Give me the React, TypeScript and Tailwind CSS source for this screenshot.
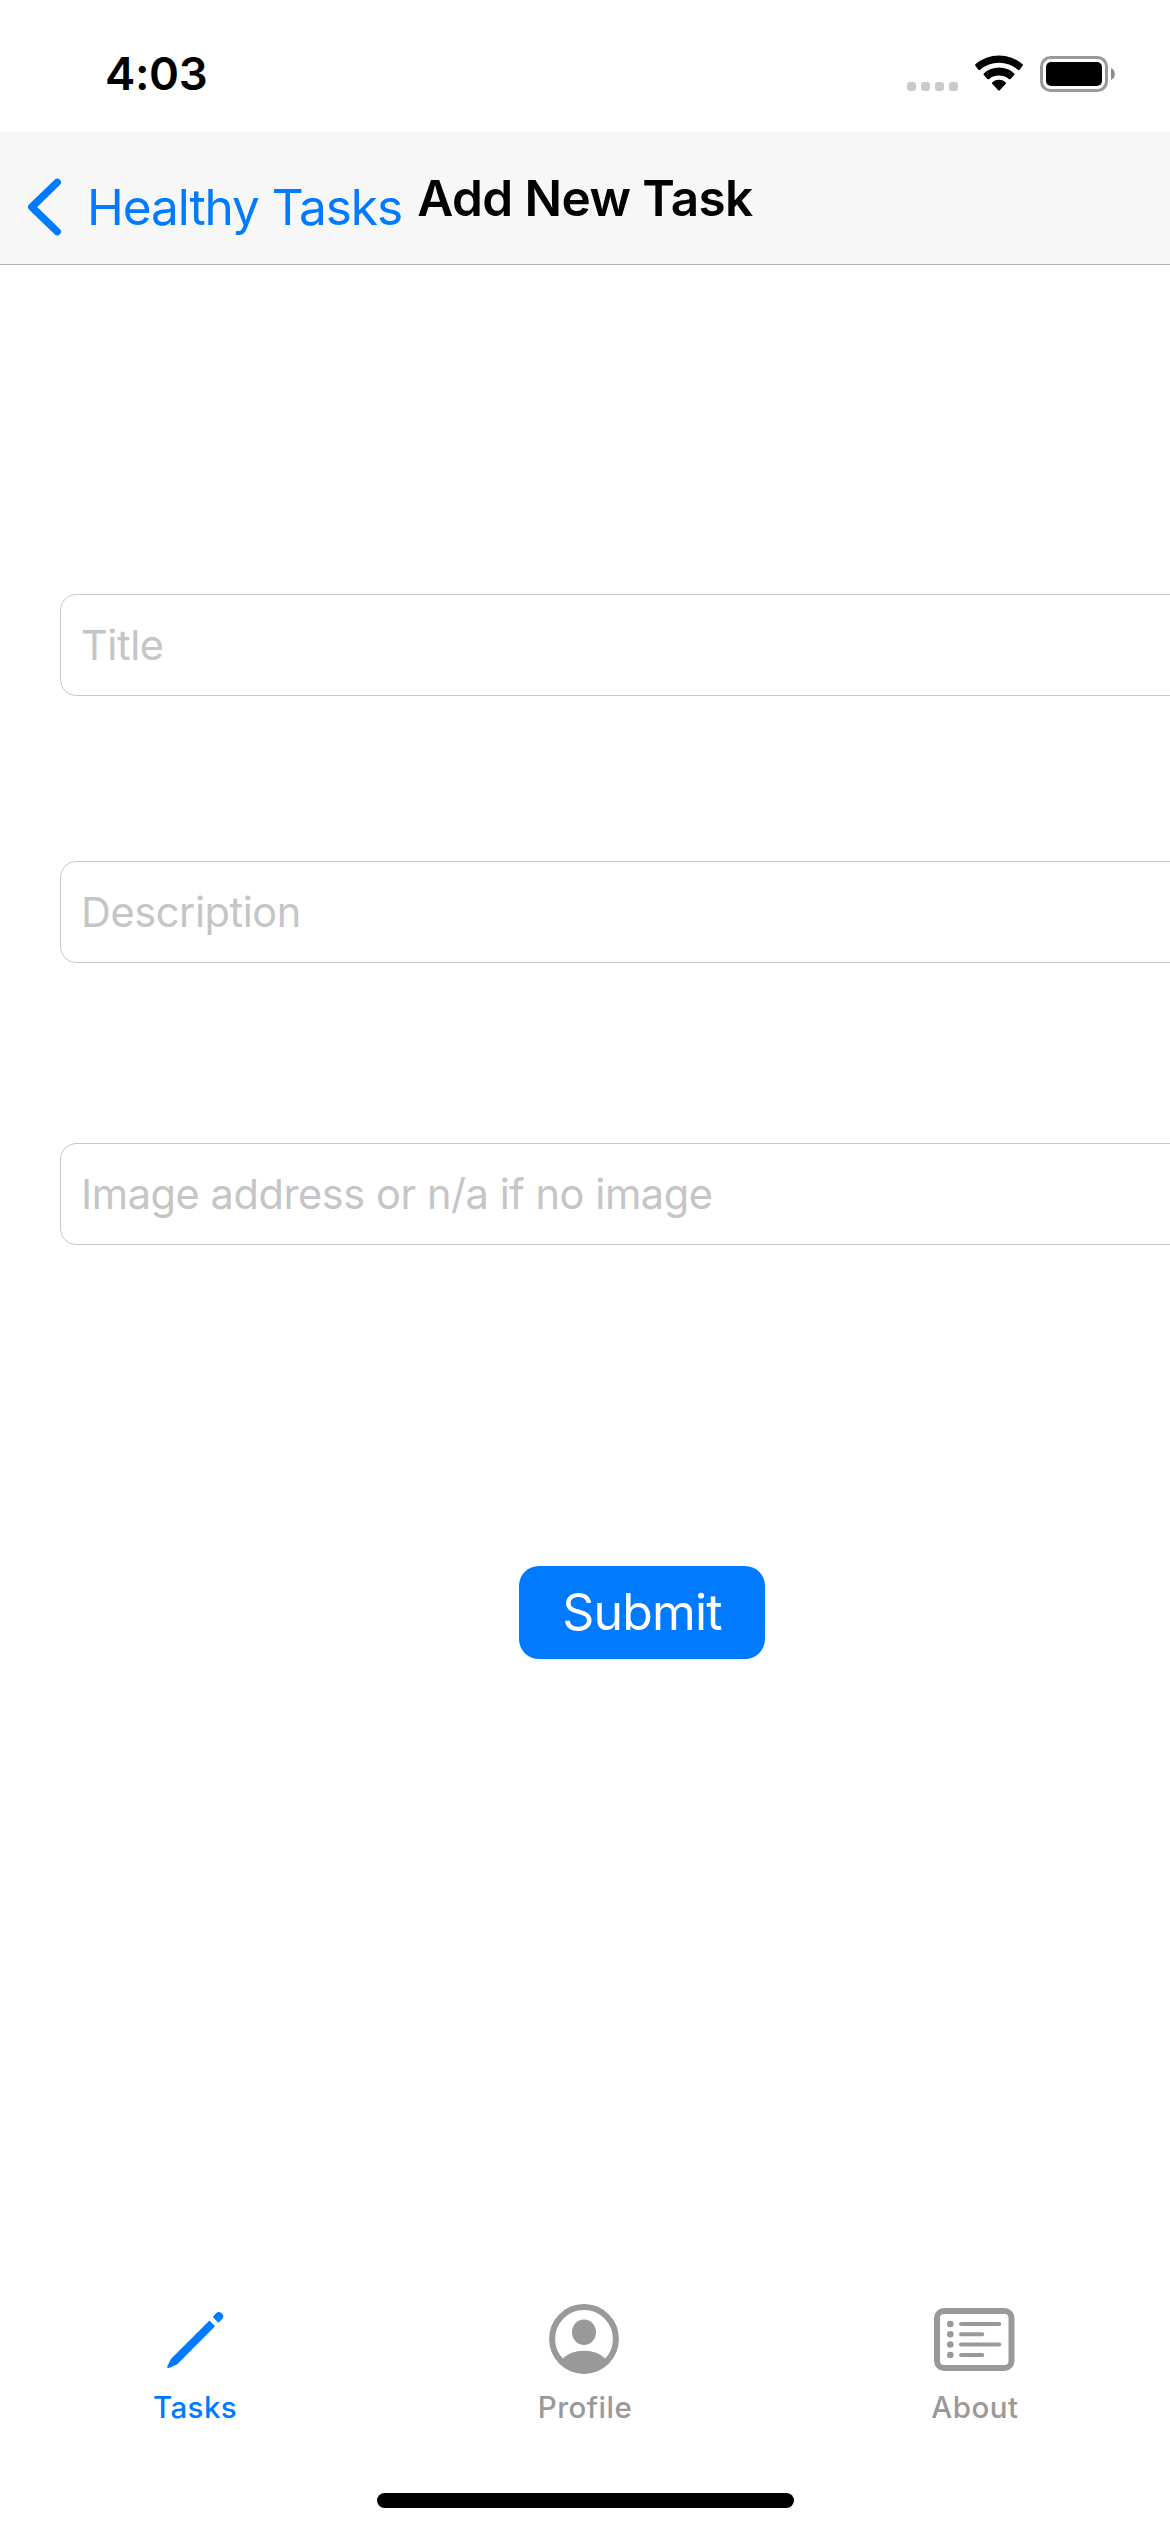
import React from "react";

function StatusBar() {
  return (
    <div className="flex h-[132px] shrink-0 items-start justify-between bg-white pt-[44px] pr-[54px] pl-[105px]">
      <span className="h-[60px] text-[45.5px] leading-[60px] font-semibold tracking-[-0.4px]">4:03</span>
      <svg width="211" height="60" viewBox="0 0 211 60" fill="none">
        <g fill="#cacaca">
          <rect x="2" y="38" width="9" height="9" rx="3" />
          <rect x="16" y="38" width="9" height="9" rx="3" />
          <rect x="30" y="38" width="9" height="9" rx="3" />
          <rect x="44" y="38" width="9" height="9" rx="3" />
        </g>
        <g fill="#000">
          <path d="M70.4 20.2Q69.6 21 70.4 21.8L73.4 25.8Q74.3 26.6 75.2 25.8A28.6 28.6 0 0 1 112.8 25.8Q113.7 26.6 114.6 25.8L117.6 21.8Q118.4 21 117.6 20.2A36 36 0 0 0 70.4 20.2Z" />
          <path d="M78.8 29.4Q78 30.2 78.8 31L82.4 34.9Q83.3 35.7 84.2 34.9A16.2 16.2 0 0 1 103.8 34.9Q104.7 35.7 105.6 34.9L109.2 31Q110 30.2 109.2 29.4A22.5 22.5 0 0 0 78.8 29.4Z" />
          <path d="M87.4 38.2Q86.5 39.1 87.4 40L93.2 46.2Q94 47 94.8 46.2L100.6 40Q101.5 39.1 100.6 38.2A10.5 10.5 0 0 0 87.4 38.2Z" />
        </g>
        <rect x="136.5" y="13.5" width="65" height="33" rx="9" stroke="#999" strokeWidth="3" />
        <rect x="141" y="18" width="56" height="24" rx="5" fill="#000" />
        <path d="M206 24C211.2 26 211.2 34 206 36Z" fill="#8c8c8c" />
      </svg>
    </div>
  );
}

function NavigationBar() {
  return (
    <header className="flex h-[133px] shrink-0 items-center border-b border-[#b2b2b2] bg-[#f7f7f7]">
      <div className="flex w-0 min-w-0 flex-1 items-center pt-[18px] text-[#007aff]">
        <svg width="36" height="60" viewBox="0 0 36 60" fill="none" className="ml-[27px] shrink-0">
          <path d="M30.2 5.3L4.8 30L30.2 54.7" stroke="currentColor" strokeWidth="7.4" strokeLinecap="round" strokeLinejoin="round" />
        </svg>
        <span className="ml-[24px] text-[49.5px] leading-[60px] tracking-[-1.05px] whitespace-nowrap">Healthy Tasks</span>
      </div>
      <h1 className="text-[49.5px] leading-[60px] font-semibold tracking-[-0.6px] whitespace-nowrap">Add New Task</h1>
      <div className="w-0 flex-1" />
    </header>
  );
}

function Field({ label }: { label: string }) {
  return (
    <input
      type="text"
      placeholder={label}
      className="h-[102px] w-full rounded-[16px] border border-[#c8c8ca] bg-white px-[20px] text-[41.5px] tracking-[-0.42px] outline-none placeholder:text-[#c5c5c7]"
    />
  );
}

function PencilIcon() {
  return (
    <svg width="90" height="80" viewBox="-10 0 90 80" fill="currentColor">
      <path d="M49.5 20.5L55 26.3L17.5 64Q17 64.4 16.2 64.8L8.8 68Q6.8 68.6 7.3 66.6L10.6 59.6Q10.9 58.9 11.4 58.4Z" />
      <path d="M52.8 17L56 13.3Q59.3 10.6 62 13.6Q64.8 16.6 61.8 19.6L58.4 22.8Z" />
    </svg>
  );
}

function ProfileIcon() {
  return (
    <svg width="90" height="80" viewBox="0 0 90 80" fill="none">
      <circle cx="44" cy="39" r="31.9" stroke="currentColor" strokeWidth="6" />
      <ellipse cx="44" cy="32.3" rx="12" ry="12.8" fill="currentColor" />
      <path d="M22 59Q30.5 50.7 44 50.7T66 59Q57.5 72 44 72T22 59Z" fill="currentColor" />
    </svg>
  );
}

function AboutIcon() {
  return (
    <svg width="90" height="80" viewBox="0 0 90 80" fill="none">
      <rect x="7" y="11" width="74.5" height="57" rx="7" stroke="currentColor" strokeWidth="6" />
      <g fill="currentColor">
        <circle cx="20.3" cy="24" r="3.3" />
        <circle cx="20.3" cy="34.3" r="3.3" />
        <circle cx="20.3" cy="44.5" r="3.3" />
        <circle cx="20.3" cy="55" r="3.3" />
      </g>
      <path d="M31 24H69.3M31 34.3H52.3M31 44.5H69.3M31 55H52.3" stroke="currentColor" strokeWidth="4" strokeLinecap="round" />
    </svg>
  );
}

function TabBar() {
  return (
    <nav className="grid h-[200px] shrink-0 grid-cols-3 text-[#999]">
      <a className="flex flex-col items-center text-[#007aff]">
        <PencilIcon />
        <span className="mt-[7px] text-[29.5px] leading-[40px] font-medium tracking-[0.4px]">Tasks</span>
      </a>
      <a className="flex flex-col items-center">
        <ProfileIcon />
        <span className="mt-[7px] text-[29.5px] leading-[40px] font-medium tracking-[0.5px]">Profile</span>
      </a>
      <a className="flex flex-col items-center">
        <AboutIcon />
        <span className="mt-[7px] text-[29.5px] leading-[40px] font-medium tracking-[0.5px]">About</span>
      </a>
    </nav>
  );
}

export default function App() {
  return (
    <div className="flex h-[2532px] w-[1170px] flex-col overflow-hidden bg-white font-['Inter',sans-serif] text-black">
      <StatusBar />
      <NavigationBar />
      <main className="flex-1 overflow-hidden pt-[329px] pl-[60px]">
        <form className="flex w-[1164px] flex-col items-center">
          <Field label="Title" />
          <div className="h-[165px]" />
          <Field label="Description" />
          <div className="h-[180px]" />
          <Field label="Image address or n/a if no image" />
          <button type="button" className="mt-[321px] h-[93px] w-[246px] rounded-[20px] bg-[#007aff] text-[50px] leading-[93px] tracking-[-0.8px] text-white">
            Submit
          </button>
        </form>
      </main>
      <TabBar />
      <div className="flex h-[32px] shrink-0 justify-center">
        <div className="mt-[-7px] h-[15px] w-[417px] rounded-full bg-black" />
      </div>
    </div>
  );
}
